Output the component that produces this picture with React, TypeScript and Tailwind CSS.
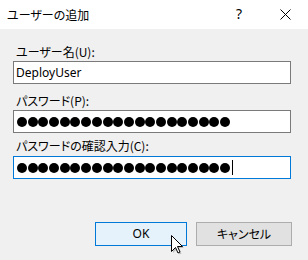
import React from 'react';

const jp = "font-['Noto_Sans_CJK_JP','Noto_Sans',sans-serif] [font-feature-settings:'palt']";

const Dots: React.FC<{ count: number; caret?: boolean }> = ({ count, caret }) => (
  <div className="flex items-center h-full pl-[3px] gap-[0.7px]">
    {Array.from({ length: count }).map((_, i) => (
      <span key={i} className="w-[10px] h-[10px] rounded-full bg-black shrink-0" />
    ))}
    {caret && <span className="w-[1px] h-[15px] bg-black ml-[1px]" />}
  </div>
);

const App: React.FC = () => {
  return (
    <div className="relative w-[308px] h-[260px] bg-[#f0f0f0] overflow-hidden text-black">
      {/* title bar */}
      <div className="h-[29px] bg-white flex items-center">
        <span className={`pl-[7px] text-[12px] leading-[16px] ${jp}`}>ユーザーの追加</span>
        <div className="ml-auto flex h-full">
          <div className="w-[46px] flex items-center justify-center font-['Noto_Sans',sans-serif] text-[14px] leading-none pb-[1px]">
            ?
          </div>
          <div className="w-[46px] flex items-center justify-center">
            <svg width="11" height="11" viewBox="0 0 11 11">
              <path d="M0.5 0.5 L10.5 10.5 M10.5 0.5 L0.5 10.5" stroke="#000" strokeWidth="1" />
            </svg>
          </div>
        </div>
      </div>

      {/* form */}
      <div className="pl-[13px] pr-[17px]">
        <div className={`mt-[15px] pl-[3px] text-[12px] leading-[16px] ${jp}`}>ユーザー名(U):</div>
        <div className="mt-[1px] h-[23px] bg-white border border-[#7a7a7a] flex items-center pl-[2px] font-['Noto_Sans',sans-serif] text-[12px]">
          DeployUser
        </div>

        <div className={`mt-[9px] pl-[3px] text-[12px] leading-[16px] ${jp}`}>パスワード(P):</div>
        <div className="mt-[1px] h-[23px] bg-white border border-[#7a7a7a]">
          <Dots count={20} />
        </div>

        <div className={`mt-[5px] pl-[3px] text-[12px] leading-[16px] ${jp}`}>パスワードの確認入力(C):</div>
        <div className="mt-[2px] h-[23px] bg-white border border-[#0078d7]">
          <Dots count={20} caret />
        </div>
      </div>

      {/* buttons */}
      <div className="mt-[43px] flex justify-end gap-[9px] pr-[16px]">
        <button className="w-[92px] h-[24px] bg-[#e5f1fb] border border-[#0078d7] font-['Noto_Sans',sans-serif] text-[12px] leading-none">
          OK
        </button>
        <button className={`w-[96px] h-[24px] bg-[#e1e1e1] border border-[#adadad] text-[12px] leading-none ${jp}`}>
          キャンセル
        </button>
      </div>

      {/* mouse pointer */}
      <svg className="absolute left-[171px] top-[235px]" width="14" height="21" viewBox="0 0 14 21">
        <path d="M2 2 L2 18 L6 14 L8.5 19.5 L10.5 18.5 L8 13 L13 13 Z" fill="#00000033" />
        <path d="M0.5 0.5 L0.5 16.5 L4.5 12.5 L7 18 L9 17 L6.5 11.5 L11.5 11.5 Z" fill="#fff" stroke="#000" strokeWidth="1" strokeLinejoin="miter" />
      </svg>
    </div>
  );
};

export default App;
